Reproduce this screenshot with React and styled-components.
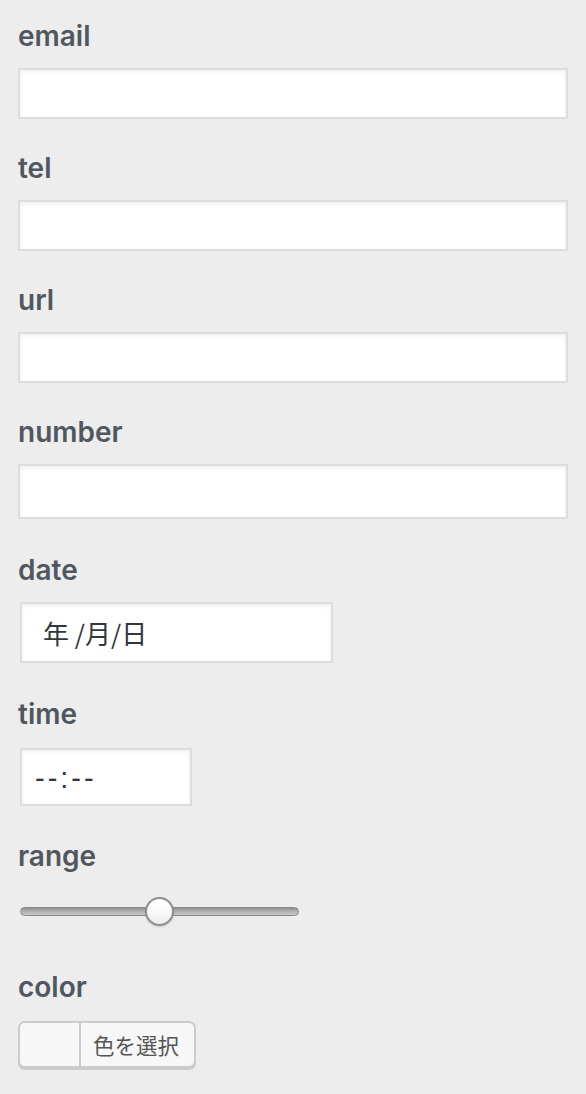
import React from "react";
import styled, { createGlobalStyle } from "styled-components";

const GlobalStyle = createGlobalStyle`
  html, body { margin: 0; padding: 0; background: #ededed; }
  body { font-family: Inter, "Liberation Sans", "Noto Sans CJK JP", sans-serif; }
  * { box-sizing: border-box; }
`;

const Page = styled.form`
  width: 586px;
  min-height: 1094px;
  padding: 18px 18px 0 18px;
  display: flex;
  flex-direction: column;
`;

const Field = styled.div`
  display: flex;
  flex-direction: column;
  align-items: flex-start;
  margin-bottom: ${(p) => p.$gap}px;
`;

const Label = styled.label`
  display: block;
  font-family: Inter, "Liberation Sans", sans-serif;
  font-size: 28px;
  font-weight: 600;
  line-height: 36px;
  color: #50575e;
  margin-bottom: ${(p) => p.$mb ?? 14}px;
`;

const TextInput = styled.input`
  display: block;
  width: 100%;
  height: ${(p) => p.$h ?? 51}px;
  margin: 0;
  padding: 6px 14px;
  background: #ffffff;
  border: 2px solid #dddddd;
  border-radius: 0;
  box-shadow: inset 0 2px 4px rgba(0, 0, 0, 0.07);
  font-size: 26px;
  color: #32373c;
  outline: none;
`;

const PickerBox = styled.div`
  display: flex;
  align-items: center;
  width: ${(p) => p.$w}px;
  height: ${(p) => p.$h}px;
  margin-left: 2px;
  padding-left: ${(p) => p.$pl}px;
  background: #ffffff;
  border: 2px solid #dddddd;
  box-shadow: inset 0 2px 4px rgba(0, 0, 0, 0.07);
  color: #32373c;
`;

const DateText = styled.span`
  font-family: "Noto Sans CJK JP", sans-serif;
  font-size: 26px;
  line-height: 1;
  white-space: pre;
`;

const TimeText = styled.span`
  font-family: "Liberation Sans", sans-serif;
  font-size: 29px;
  letter-spacing: 3px;
  line-height: 1;
  white-space: pre;
  margin-top: 2px;
`;

const Range = styled.input`
  -webkit-appearance: none;
  appearance: none;
  display: block;
  width: 279px;
  height: 29px;
  margin: 0 0 0 2px;
  padding: 0;
  background: transparent;
  outline: none;

  &::-webkit-slider-runnable-track {
    height: 9px;
    border-radius: 5px;
    border: 1px solid #8a8a8a;
    background: linear-gradient(#8e8e8e 0%, #a9a9a9 35%, #c9c9c9 100%);
  }

  &::-webkit-slider-thumb {
    -webkit-appearance: none;
    appearance: none;
    width: 29px;
    height: 29px;
    margin-top: -11px;
    border-radius: 50%;
    border: 2px solid #8f8f8f;
    background: linear-gradient(#ffffff 0%, #fafafa 50%, #ececec 100%);
    box-shadow: 0 1px 2px rgba(0, 0, 0, 0.15);
  }
`;

const ColorButton = styled.button`
  display: flex;
  align-items: stretch;
  width: 178px;
  height: 47px;
  margin: 0;
  padding: 0;
  background: #f7f7f7;
  border: 2px solid #cccccc;
  border-radius: 7px;
  box-shadow: 0 2px 0 #cccccc;
  overflow: hidden;
  cursor: pointer;
`;

const Swatch = styled.span`
  display: block;
  width: 61px;
  background: #f7f7f7;
  border-right: 2px solid #cccccc;
`;

const ButtonText = styled.span`
  display: flex;
  align-items: center;
  padding-left: 12px;
  font-family: "Noto Sans CJK JP", sans-serif;
  font-size: 21.5px;
  color: #555555;
  line-height: 1;
`;

export default function App() {
  return (
    <>
      <GlobalStyle />
      <Page onSubmit={(e) => e.preventDefault()}>
        <Field $gap={31}>
          <Label htmlFor="f-email">email</Label>
          <TextInput id="f-email" type="email" />
        </Field>
        <Field $gap={31}>
          <Label htmlFor="f-tel">tel</Label>
          <TextInput id="f-tel" type="tel" />
        </Field>
        <Field $gap={31}>
          <Label htmlFor="f-url">url</Label>
          <TextInput id="f-url" type="url" />
        </Field>
        <Field $gap={33}>
          <Label htmlFor="f-number">number</Label>
          <TextInput id="f-number" type="text" inputMode="numeric" $h={55} />
        </Field>
        <Field $gap={33}>
          <Label>date</Label>
          <PickerBox $w={313} $h={61} $pl={21}>
            <DateText>年 /月/日</DateText>
          </PickerBox>
        </Field>
        <Field $gap={32}>
          <Label $mb={16}>time</Label>
          <PickerBox $w={172} $h={58} $pl={13}>
            <TimeText>--:--</TimeText>
          </PickerBox>
        </Field>
        <Field $gap={43}>
          <Label htmlFor="f-range" $mb={23}>range</Label>
          <Range id="f-range" type="range" min="0" max="100" defaultValue="50" />
        </Field>
        <Field $gap={0}>
          <Label $mb={16}>color</Label>
          <ColorButton type="button">
            <Swatch />
            <ButtonText>色を選択</ButtonText>
          </ColorButton>
        </Field>
      </Page>
    </>
  );
}
